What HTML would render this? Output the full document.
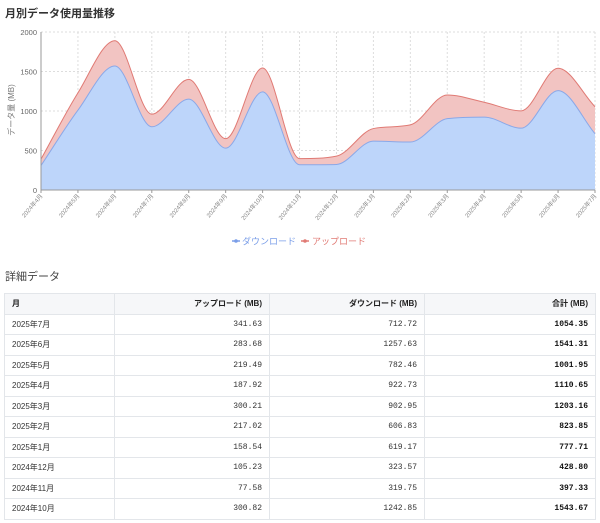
<!DOCTYPE html>
<html><head><meta charset="utf-8"><style>
body{margin:0;width:600px;height:523px;background:#fff;font-family:"Liberation Sans","Noto Sans CJK JP",sans-serif;color:#333;overflow:hidden;position:relative}
h2{position:absolute;margin:0;font-size:11px;font-weight:bold;color:#333}
table{position:absolute;left:4px;top:293px;width:592px;border-collapse:collapse;font-size:8px}
td,th{border:1px solid #e3e6ea;height:20.5px;padding:0 7px;box-sizing:border-box}
th{background:#f6f7f9;font-weight:bold;text-align:right;color:#222}
th:first-child,td:first-child{text-align:left}
td{text-align:right;font-family:"Liberation Mono","Noto Sans CJK JP",monospace;color:#333}
td:first-child{font-family:"Liberation Sans","Noto Sans CJK JP",sans-serif}
td:last-child{font-weight:bold;color:#111}
</style></head><body>
<h2 style="left:5px;top:5px">月別データ使用量推移</h2>
<svg id="c" width="600" height="250" style="position:absolute;left:0;top:0"></svg>
<h2 style="left:5px;top:268px;font-weight:normal;color:#444">詳細データ</h2>
<table>
<colgroup><col style="width:110px"><col style="width:155px"><col style="width:155px"><col></colgroup>
<tr><th>月</th><th>アップロード (MB)</th><th>ダウンロード (MB)</th><th>合計 (MB)</th></tr>
<tr><td>2025年7月</td><td>341.63</td><td>712.72</td><td>1054.35</td></tr>
<tr><td>2025年6月</td><td>283.68</td><td>1257.63</td><td>1541.31</td></tr>
<tr><td>2025年5月</td><td>219.49</td><td>782.46</td><td>1001.95</td></tr>
<tr><td>2025年4月</td><td>187.92</td><td>922.73</td><td>1110.65</td></tr>
<tr><td>2025年3月</td><td>300.21</td><td>902.95</td><td>1203.16</td></tr>
<tr><td>2025年2月</td><td>217.02</td><td>606.83</td><td>823.85</td></tr>
<tr><td>2025年1月</td><td>158.54</td><td>619.17</td><td>777.71</td></tr>
<tr><td>2024年12月</td><td>105.23</td><td>323.57</td><td>428.80</td></tr>
<tr><td>2024年11月</td><td>77.58</td><td>319.75</td><td>397.33</td></tr>
<tr><td>2024年10月</td><td>300.82</td><td>1242.85</td><td>1543.67</td></tr>
</table>
<script>
var dl=[310,1010,1570,800,1150,530,1242.85,319.75,323.57,619.17,606.83,902.95,922.73,782.46,1257.63,712.72];
var tot=[390,1230,1890,960,1400,650,1543.67,397.33,428.8,777.71,823.85,1203.16,1110.65,1001.95,1541.31,1054.35];
var labels=["2024年4月","2024年5月","2024年6月","2024年7月","2024年8月","2024年9月","2024年10月","2024年11月","2024年12月","2025年1月","2025年2月","2025年3月","2025年4月","2025年5月","2025年6月","2025年7月"];
var x0=41,x1=595,yT=32,yB=190,n=16,dx=(x1-x0)/15;
function X(i){return x0+i*dx}function Y(v){return yB-v*(yB-yT)/2000}
function curve(d){var p=d.map(function(v,i){return[X(i),Y(v)]});var m=[],s=[];
for(var i=0;i<n-1;i++)s.push((p[i+1][1]-p[i][1])/dx);
for(i=0;i<n;i++){if(i==0)m.push(s[0]);else if(i==n-1)m.push(s[n-2]);else m.push(s[i-1]*s[i]<=0?0:(s[i-1]+s[i])/2);}
for(i=0;i<n-1;i++){if(s[i]==0){m[i]=m[i+1]=0;continue}var a=m[i]/s[i],b=m[i+1]/s[i],h=a*a+b*b;if(h>9){var t=3/Math.sqrt(h);m[i]=t*a*s[i];m[i+1]=t*b*s[i]}}
var str="M"+p[0][0]+","+p[0][1];for(i=0;i<n-1;i++){str+=" C"+(p[i][0]+dx/3)+","+(p[i][1]+m[i]*dx/3)+" "+(p[i+1][0]-dx/3)+","+(p[i+1][1]-m[i+1]*dx/3)+" "+p[i+1][0]+","+p[i+1][1]}return str}
var h="";
for(var k=0;k<=4;k++){var y=Y(k*500);h+='<line x1="'+x0+'" x2="'+x1+'" y1="'+y+'" y2="'+y+'" stroke="#ddd" stroke-dasharray="2,2"/>';h+='<text x="37" y="'+(y+3)+'" font-size="7.5" fill="#666" text-anchor="end">'+(k*500)+'</text>'}
for(var i=0;i<n;i++){var x=X(i);h+='<line x1="'+x+'" x2="'+x+'" y1="'+yT+'" y2="'+yB+'" stroke="#ddd" stroke-dasharray="2,2"/>';h+='<line x1="'+x+'" x2="'+x+'" y1="'+yB+'" y2="'+(yB+3)+'" stroke="#999"/>';h+='<text transform="translate('+(x+2)+','+(yB+6)+') rotate(-50)" font-size="6" fill="#888" text-anchor="end">'+labels[i]+'</text>'}
var ct=curve(tot),cd=curve(dl);
h+='<path d="'+ct+' L'+x1+','+yB+' L'+x0+','+yB+'Z" fill="#f2c4c2"/>';
h+='<path d="'+cd+' L'+x1+','+yB+' L'+x0+','+yB+'Z" fill="#bdd5fa"/>';
h+='<path d="'+ct+'" fill="none" stroke="#e07a74" stroke-width="1"/>';
h+='<path d="'+cd+'" fill="none" stroke="#8aa8e8" stroke-width="1"/>';
h+='<line x1="'+x0+'" x2="'+x0+'" y1="'+yT+'" y2="'+yB+'" stroke="#999"/><line x1="'+x0+'" x2="'+x1+'" y1="'+yB+'" y2="'+yB+'" stroke="#999"/>';
h+='<text transform="translate(14,110) rotate(-90)" font-size="8" fill="#777" text-anchor="middle">データ量 (MB)</text>';
h+='<line x1="232" x2="240" y1="241" y2="241" stroke="#7a9ee8" stroke-width="1.5"/><circle cx="236" cy="241" r="1.8" fill="#7a9ee8"/><text x="242" y="244.5" font-size="9" fill="#7a9ee8">ダウンロード</text>';
h+='<line x1="301" x2="309" y1="241" y2="241" stroke="#e07a74" stroke-width="1.5"/><circle cx="305" cy="241" r="1.8" fill="#e07a74"/><text x="312" y="244.5" font-size="9" fill="#e07a74">アップロード</text>';
document.getElementById("c").innerHTML=h;
</script>
</body></html>
